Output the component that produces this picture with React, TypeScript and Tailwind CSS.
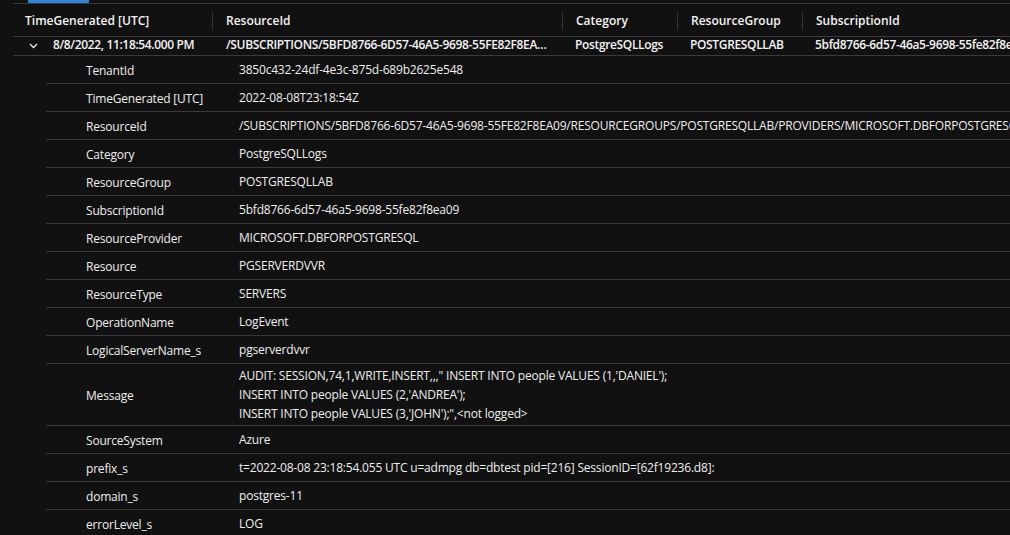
import React from "react";

const rows: [string, string[]][] = [
  ["TenantId", ["3850c432-24df-4e3c-875d-689b2625e548"]],
  ["TimeGenerated [UTC]", ["2022-08-08T23:18:54Z"]],
  [
    "ResourceId",
    [
      "/SUBSCRIPTIONS/5BFD8766-6D57-46A5-9698-55FE82F8EA09/RESOURCEGROUPS/POSTGRESQLLAB/PROVIDERS/MICROSOFT.DBFORPOSTGRESQL/SERVERS/PGSERVERDVVR",
    ],
  ],
  ["Category", ["PostgreSQLLogs"]],
  ["ResourceGroup", ["POSTGRESQLLAB"]],
  ["SubscriptionId", ["5bfd8766-6d57-46a5-9698-55fe82f8ea09"]],
  ["ResourceProvider", ["MICROSOFT.DBFORPOSTGRESQL"]],
  ["Resource", ["PGSERVERDVVR"]],
  ["ResourceType", ["SERVERS"]],
  ["OperationName", ["LogEvent"]],
  ["LogicalServerName_s", ["pgserverdvvr"]],
  [
    "Message",
    [
      "AUDIT: SESSION,74,1,WRITE,INSERT,,,\" INSERT INTO people VALUES (1,'DANIEL');",
      "INSERT INTO people VALUES (2,'ANDREA');",
      "INSERT INTO people VALUES (3,'JOHN');\",<not logged>",
    ],
  ],
  ["SourceSystem", ["Azure"]],
  [
    "prefix_s",
    ["t=2022-08-08 23:18:54.055 UTC u=admpg db=dbtest pid=[216] SessionID=[62f19236.d8]:"],
  ],
  ["domain_s", ["postgres-11"]],
  ["errorLevel_s", ["LOG"]],
];

function Chevron() {
  return (
    <svg width="9" height="6" viewBox="0 0 9 6" className="shrink-0">
      <polyline
        points="1,1 4.5,4.5 8,1"
        fill="none"
        stroke="#e8e8e8"
        strokeWidth="1.3"
      />
    </svg>
  );
}

export default function App() {
  return (
    <div
      className="w-[1010px] h-[535px] bg-[#111111] overflow-hidden text-[12px] text-[#f4f4f4]"
      style={{ fontFamily: '"Open Sans", "Noto Sans", sans-serif' }}
    >
      {/* tab indicator */}
      <div className="h-[3px] flex">
        <div className="ml-[28px] w-[61px] h-[3px] bg-[#2f86d6]" />
      </div>
      <div className="ml-[13px]">
        {/* header */}
        <div className="h-[34px] border-t border-b border-[#3a3a3a] flex items-center font-semibold whitespace-nowrap pt-[1px]">
          <div className="w-[199px] shrink-0 pl-[12px]">TimeGenerated [UTC]</div>
          <div className="w-[350px] shrink-0 pl-[13px] border-l border-[#333333]">
            ResourceId
          </div>
          <div className="w-[115px] shrink-0 pl-[13px] border-l border-[#333333]">
            Category
          </div>
          <div className="w-[125px] shrink-0 pl-[13px] border-l border-[#333333]">
            ResourceGroup
          </div>
          <div className="flex-1 pl-[13px] border-l border-[#333333]">
            SubscriptionId
          </div>
        </div>
        {/* data row */}
        <div className="h-[19px] border-b border-[#3a3a3a] flex items-start font-semibold whitespace-nowrap leading-[16px] tracking-[-0.35px] overflow-hidden">
          <div className="w-[199px] shrink-0 flex items-center">
            <div className="w-[40px] shrink-0 flex items-center pl-[16px] pt-[1px]">
              <Chevron />
            </div>
            <span>8/8/2022, 11:18:54.000 PM</span>
          </div>
          <div className="w-[350px] shrink-0 pl-[14px] pr-[12px] truncate">
            /SUBSCRIPTIONS/5BFD8766-6D57-46A5-9698-55FE82F8EA09/RESOURCEGROUPS/POSTGRESQLLAB
          </div>
          <div className="w-[115px] shrink-0 pl-[13px]">PostgreSQLLogs</div>
          <div className="w-[125px] shrink-0 pl-[13px]">POSTGRESQLLAB</div>
          <div className="shrink-0 pl-[13px]">5bfd8766-6d57-46a5-9698-55fe82f8ea09</div>
        </div>
        {/* detail rows */}
        <div className="ml-[33px] tracking-[-0.2px]">
          {rows.map(([label, lines]) => (
            <div
              key={label}
              className="min-h-[28px] border-b border-[#3a3a3a] flex items-center whitespace-nowrap text-[#eeeeee]"
            >
              <div className="w-[193px] shrink-0 pl-[40px] pt-[2px]">{label}</div>
              <div className="flex flex-col leading-[19px] py-[2px]">
                {lines.map((l, i) => (
                  <span key={i}>{l}</span>
                ))}
              </div>
            </div>
          ))}
        </div>
      </div>
    </div>
  );
}
